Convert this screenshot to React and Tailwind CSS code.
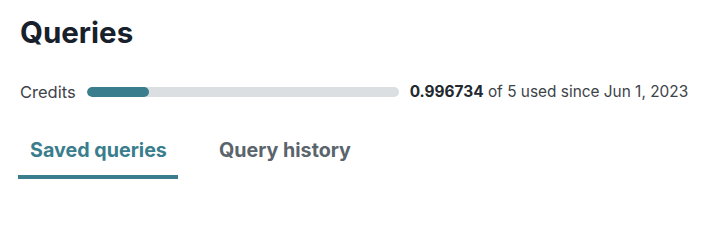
export default function App() {
  return (
    <div className="w-[719px] h-[203px] bg-white px-5 pt-[13px]" style={{ fontFamily: 'Inter, "Noto Sans", sans-serif' }}>
      <h1 className="text-[29.5px] leading-[38px] font-bold text-[#18212b]">Queries</h1>
      <div className="mt-[29px] flex items-center h-[24px]">
        <span className="text-[16.5px] text-[#3d4349]">Credits</span>
        <div className="ml-[11px] w-[312px] h-[10px] rounded-full bg-[#dcdfe2] overflow-hidden">
          <div className="h-full w-[62px] rounded-full bg-[#3a7d8d]" />
        </div>
        <span className="ml-[11px] text-[15.4px] text-[#3d4349]">
          <span className="font-bold text-[#22282e]">0.996734</span> of 5 used since Jun 1, 2023
        </span>
      </div>
      <div className="mt-[33px] -ml-[2px] flex">
        <div className="pl-[12px] pr-[11px] pb-[12px] border-b-4 border-[#3a7d8d]">
          <span className="block text-[19.7px] leading-[26px] font-bold text-[#3a7d8d]">Saved queries</span>
        </div>
        <div className="ml-[30px] px-[11px] pb-[12px]">
          <span className="block text-[19.7px] leading-[26px] font-bold text-[#5a646c]">Query history</span>
        </div>
      </div>
    </div>
  );
}
